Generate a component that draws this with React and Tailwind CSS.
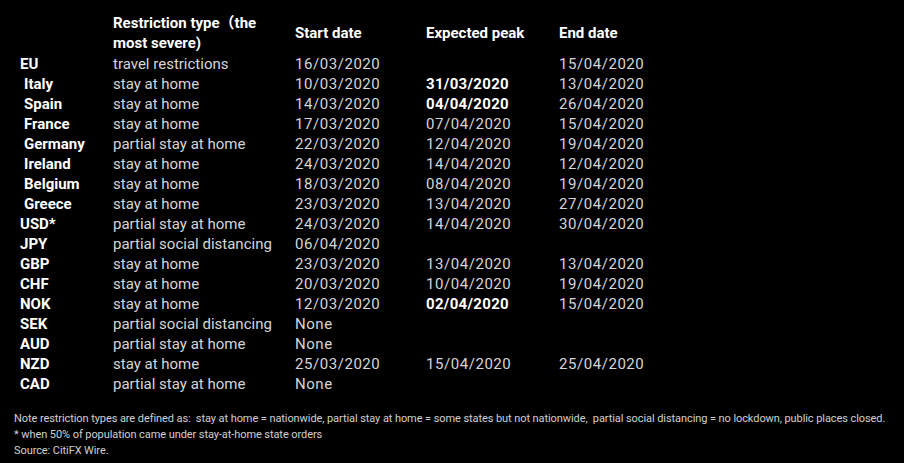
import React from "react";

const rows = [
  ["EU", false, "travel restrictions", "16/03/2020", "", "15/04/2020"],
  ["Italy", true, "stay at home", "10/03/2020", "*31/03/2020", "13/04/2020"],
  ["Spain", true, "stay at home", "14/03/2020", "*04/04/2020", "26/04/2020"],
  ["France", true, "stay at home", "17/03/2020", "07/04/2020", "15/04/2020"],
  ["Germany", true, "partial stay at home", "22/03/2020", "12/04/2020", "19/04/2020"],
  ["Ireland", true, "stay at home", "24/03/2020", "14/04/2020", "12/04/2020"],
  ["Belgium", true, "stay at home", "18/03/2020", "08/04/2020", "19/04/2020"],
  ["Greece", true, "stay at home", "23/03/2020", "13/04/2020", "27/04/2020"],
  ["USD*", false, "partial stay at home", "24/03/2020", "14/04/2020", "30/04/2020"],
  ["JPY", false, "partial social distancing", "06/04/2020", "", ""],
  ["GBP", false, "stay at home", "23/03/2020", "13/04/2020", "13/04/2020"],
  ["CHF", false, "stay at home", "20/03/2020", "10/04/2020", "19/04/2020"],
  ["NOK", false, "stay at home", "12/03/2020", "*02/04/2020", "15/04/2020"],
  ["SEK", false, "partial social distancing", "None", "", ""],
  ["AUD", false, "partial stay at home", "None", "", ""],
  ["NZD", false, "stay at home", "25/03/2020", "15/04/2020", "25/04/2020"],
  ["CAD", false, "partial stay at home", "None", "", ""],
];

const font = { fontFamily: "Roboto, 'Noto Sans CJK SC', sans-serif" };

function DateCell({ v }) {
  if (v.startsWith("*")) {
    return (
      <div className="font-bold text-white tracking-[0.3px]">{v.slice(1)}</div>
    );
  }
  return <div className="text-[#d6d6d6] tracking-[0.55px]">{v}</div>;
}

export default function App() {
  return (
    <div
      className="w-[904px] h-[463px] bg-black overflow-hidden flex flex-col"
      style={font}
    >
      <div className="pt-[13px] pl-[20px] text-[15px] leading-[20px]">
        <div className="grid grid-cols-[93px_182px_131px_133px_auto] items-center mb-[1px]">
          <div />
          <div className="font-bold text-white">
            <div>Restriction type（the</div>
            <div>most severe)</div>
          </div>
          <div className="font-bold text-white">Start date</div>
          <div className="font-bold text-white">Expected peak</div>
          <div className="font-bold text-white">End date</div>
        </div>
        {rows.map(([label, indent, type, start, peak, end]) => (
          <div
            key={label}
            className="grid grid-cols-[93px_182px_131px_133px_auto] h-[20px]"
          >
            <div className={"font-bold text-white " + (indent ? "pl-[4px]" : "")}>
              {label}
            </div>
            <div className="text-[#d6d6d6]">{type}</div>
            <DateCell v={start} />
            <DateCell v={peak} />
            <DateCell v={end} />
          </div>
        ))}
      </div>
      <div className="mt-[17px] pl-[14px] text-[11px] leading-[16px] text-[#d0d0d0] tracking-[-0.08px] whitespace-pre">
        <div>
          Note restriction types are defined as:  stay at home = nationwide, partial stay at home = some states but not nationwide,  partial social distancing = no lockdown, public places closed.
        </div>
        <div>* when 50% of population came under stay-at-home state orders</div>
        <div>Source: CitiFX Wire.</div>
      </div>
    </div>
  );
}
